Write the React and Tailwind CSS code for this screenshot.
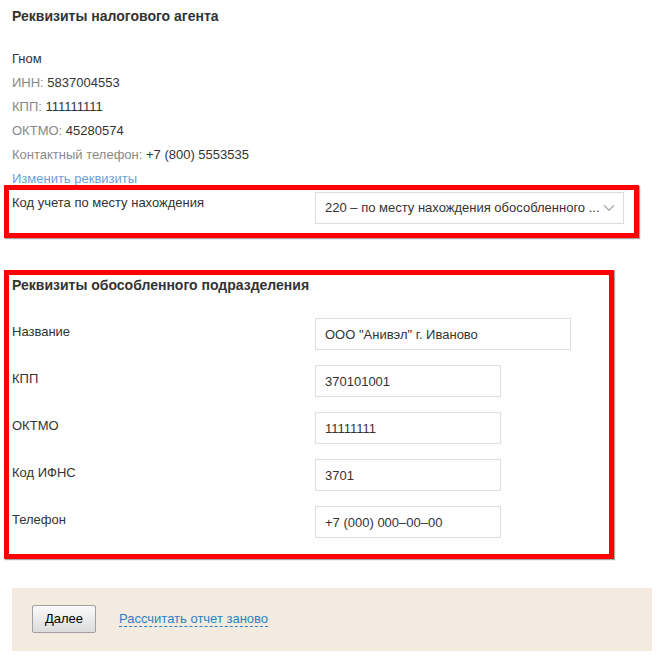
import { ChevronDown } from 'lucide-react'

const agent = [
  { label: 'ИНН:', value: '5837004553' },
  { label: 'КПП:', value: '111111111' },
  { label: 'ОКТМО:', value: '45280574' },
  { label: 'Контактный телефон:', value: '+7 (800) 5553535' },
]

const fields = [
  { label: 'Название', value: 'ООО "Анивэл" г. Иваново', wide: true },
  { label: 'КПП', value: '370101001' },
  { label: 'ОКТМО', value: '11111111' },
  { label: 'Код ИФНС', value: '3701' },
  { label: 'Телефон', value: '+7 (000) 000–00–00' },
]

const App = () => {
  return (
    <div className="min-h-[659px] bg-white text-[13px] text-[#333] font-['Liberation_Sans',Arial,sans-serif]">
      {/* Реквизиты налогового агента */}
      <div className="px-3 pt-[6px]">
        <h2 className="text-[14px] font-bold leading-[20px]">Реквизиты налогового агента</h2>
        <div className="mt-[21px] leading-[24px]">
          <div>Гном</div>
          {agent.map((row) => (
            <div key={row.label}>
              <span className="text-[#888]">{row.label}</span> {row.value}
            </div>
          ))}
          <a href="#" className="text-[#6a9fd8]">Изменить реквизиты</a>
        </div>
      </div>

      {/* Код учета */}
      <div className="relative mx-1 mt-[-6px] w-[635px] border-[5px] border-[#ff0000] px-[3px] pt-[2px] pb-[9px] shadow-[1px_1px_1px_rgba(0,0,0,0.35)]">
        <div className="flex items-start">
          <div className="w-[303px] pt-[3px] leading-[16px]">Код учета по месту нахождения</div>
          <div className="flex h-[32px] w-[309px] items-center justify-between border border-[#ddd] bg-white pl-[9px] pr-[5px]">
            <span className="truncate">220 – по месту нахождения обособленного ...</span>
            <ChevronDown size={18} strokeWidth={1.75} className="shrink-0 text-[#aaa]" />
          </div>
        </div>
      </div>

      {/* Реквизиты обособленного подразделения */}
      <div className="mx-1 mt-[32px] w-[610px] border-[5px] border-[#ff0000] px-[3px] pb-[16px] shadow-[1px_1px_1px_rgba(0,0,0,0.35)]">
        <h2 className="text-[14px] font-bold leading-[20px]">Реквизиты обособленного подразделения</h2>
        <div className="mt-[23px] flex flex-col gap-[15px]">
          {fields.map((f) => (
            <div key={f.label} className="flex items-start">
              <label className="w-[303px] pt-[6px] leading-[16px]">{f.label}</label>
              <input
                defaultValue={f.value}
                className={`h-[32px] border border-[#ddd] px-[9px] text-[13px] text-[#333] outline-none ${f.wide ? 'w-[256px]' : 'w-[186px]'}`}
              />
            </div>
          ))}
        </div>
      </div>

      {/* Кнопки */}
      <div className="ml-3 mt-[29px] flex h-[63px] w-[640px] items-start bg-[#f3ebe0] pl-[20px] pt-[17px]">
        <button className="h-[28px] w-[64px] rounded-[2px] border border-[#a0a0a0] bg-gradient-to-b from-[#fafafa] to-[#dcdcdc] text-[13px] text-black">
          Далее
        </button>
        <a href="#" className="ml-[23px] mt-[7px] border-b border-dashed border-[#2f80c2] leading-[14px] text-[#2f80c2]">
          Рассчитать отчет заново
        </a>
      </div>
    </div>
  )
}

export default App
